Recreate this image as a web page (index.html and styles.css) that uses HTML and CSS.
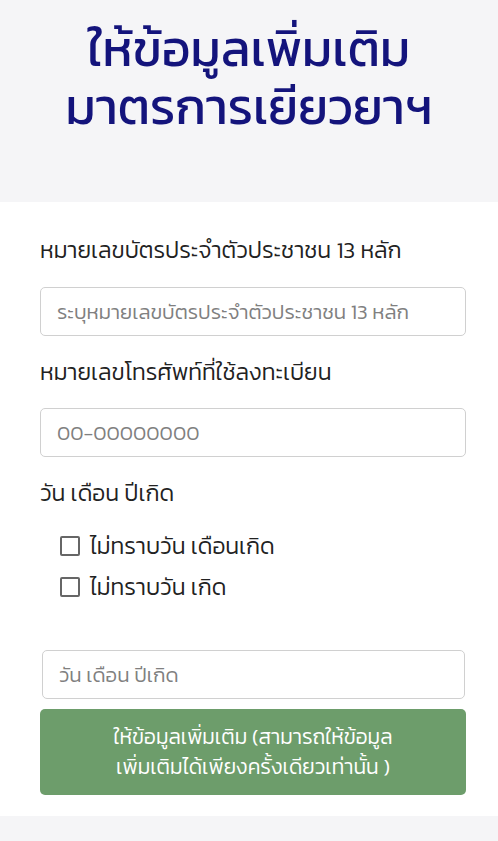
FILE: index.html
```html
<!DOCTYPE html>
<html lang="th">
<head>
  <meta charset="UTF-8" />
  <meta name="viewport" content="width=device-width, initial-scale=1" />
  <title>ให้ข้อมูลเพิ่มเติม</title>
  <link rel="stylesheet" href="styles.css">
</head>
<body>

  <header class="page-head">
    <h1>ให้ข้อมูลเพิ่มเติม<br>มาตรการเยียวยาฯ</h1>
  </header>

  <form class="info-form">
    <label class="field-label" for="idcard">หมายเลขบัตรประจำตัวประชาชน 13 หลัก</label>
    <input class="field" id="idcard" type="text" placeholder="ระบุหมายเลขบัตรประจำตัวประชาชน 13 หลัก">

    <label class="field-label" for="phone">หมายเลขโทรศัพท์ที่ใช้ลงทะเบียน</label>
    <input class="field field-phone" id="phone" type="text" placeholder="00-00000000">

    <div class="field-label">วัน เดือน ปีเกิด</div>
    <div class="checks">
      <label class="check"><span class="box"></span>ไม่ทราบวัน เดือนเกิด</label>
      <label class="check"><span class="box"></span>ไม่ทราบวัน เกิด</label>
    </div>

    <input class="field field-date" type="text" placeholder="วัน เดือน ปีเกิด">

    <button type="button" class="submit">ให้ข้อมูลเพิ่มเติม (สามารถให้ข้อมูล<br>เพิ่มเติมได้เพียงครั้งเดียวเท่านั้น )</button>
  </form>

  <div class="page-foot"></div>
</body>
</html>
```

FILE: styles.css
```css
body {
  margin: 0;
  background: #f5f5f7;
  font-family: 'Kanit', 'Noto Sans Thai', 'Noto Sans', 'DejaVu Sans', sans-serif;
  font-weight: 300;
  color: #222;
}
.page-head {
  height: 202px;
  box-sizing: border-box;
  padding-top: 20px;
  text-align: center;
}
.page-head h1 {
  margin: 0;
  font-size: 50px;
  font-weight: 400;
  line-height: 58px;
  color: #14147c;
}
.info-form {
  background: #fff;
  padding: 33px 32px 21px 40px;
  display: flex;
  flex-direction: column;
}
.field-label {
  font-size: 23px;
  line-height: 30px;
  color: #222;
}
.field {
  box-sizing: border-box;
  height: 49px;
  margin: 22px 0 21px;
  padding: 0 16px;
  border: 1px solid #d0d0d0;
  border-radius: 5px;
  font: inherit;
  font-size: 20.5px;
  color: #333;
  background: #fff;
}
.field::placeholder {
  color: #808080;
}
.field-phone {
  margin-top: 21px;
}
.checks {
  margin: 23px 0 0 20px;
  display: flex;
  flex-direction: column;
  gap: 11px;
}
.check {
  display: flex;
  align-items: center;
  gap: 10px;
  font-size: 23px;
  line-height: 30px;
  color: #222;
}
.box {
  box-sizing: border-box;
  width: 20px;
  height: 20px;
  border: 2px solid #666;
  border-radius: 2px;
}
.field-date {
  margin: 48px 1px 10px 2px;
}
.submit {
  border: none;
  border-radius: 5px;
  background: #6d9d6b;
  color: #fff;
  font: inherit;
  font-size: 21px;
  line-height: 30px;
  padding: 13px 10px;
  cursor: pointer;
}
.page-foot {
  height: 24px;
}
```
